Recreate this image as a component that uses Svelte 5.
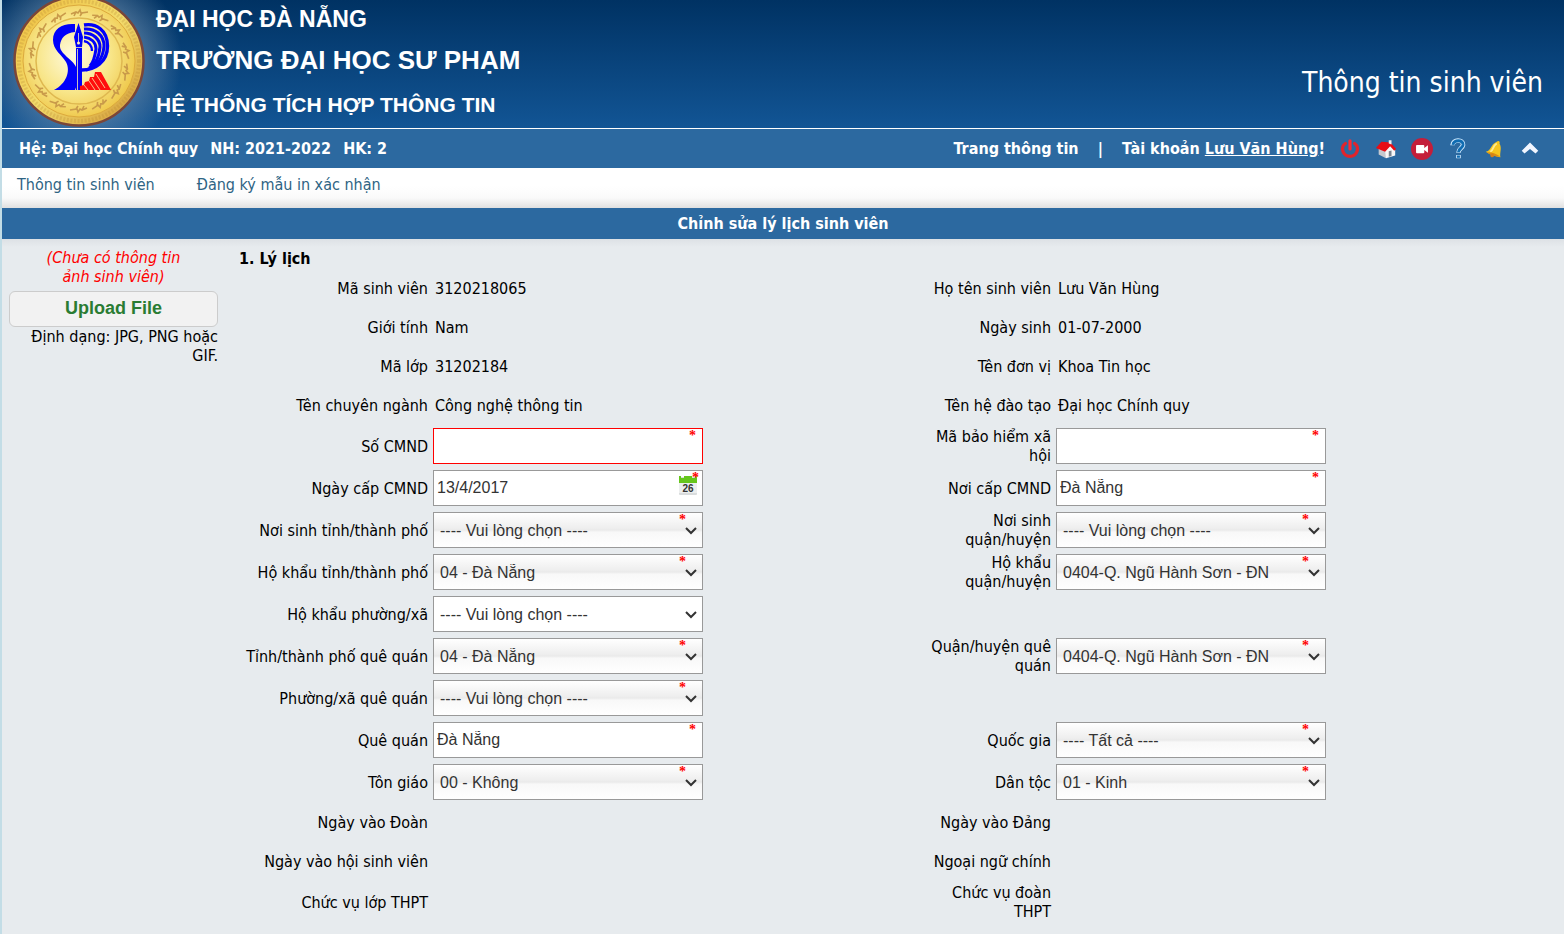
<script>
  const pick = '---- Vui lòng chọn ----';
  const rows = [
    { kind: 'info', cells: [['Mã sinh viên', 'text', '3120218065'], ['Họ tên sinh viên', 'text', 'Lưu Văn Hùng']] },
    { kind: 'info', cells: [['Giới tính', 'text', 'Nam'], ['Ngày sinh', 'text', '01-07-2000']] },
    { kind: 'info', cells: [['Mã lớp', 'text', '31202184'], ['Tên đơn vị', 'text', 'Khoa Tin học']] },
    { kind: 'info', cells: [['Tên chuyên ngành', 'text', 'Công nghệ thông tin'], ['Tên hệ đào tạo', 'text', 'Đại học Chính quy']] },
    { kind: 'edit', cells: [['Số CMND', 'input', '', 'invalid'], ['Mã bảo hiểm xã hội', 'input', '']] },
    { kind: 'edit', cells: [['Ngày cấp CMND', 'date', '13/4/2017'], ['Nơi cấp CMND', 'input', 'Đà Nẵng']] },
    { kind: 'edit', cells: [['Nơi sinh tỉnh/thành phố', 'select', pick], ['Nơi sinh quận/huyện', 'select', pick]] },
    { kind: 'edit', cells: [['Hộ khẩu tỉnh/thành phố', 'select', '04 - Đà Nẵng'], ['Hộ khẩu quận/huyện', 'select', '0404-Q. Ngũ Hành Sơn - ĐN']] },
    { kind: 'edit', cells: [['Hộ khẩu phường/xã', 'select', pick, 'optional']] },
    { kind: 'edit', cells: [['Tỉnh/thành phố quê quán', 'select', '04 - Đà Nẵng'], ['Quận/huyện quê quán', 'select', '0404-Q. Ngũ Hành Sơn - ĐN']] },
    { kind: 'edit', cells: [['Phường/xã quê quán', 'select', pick]] },
    { kind: 'edit', cells: [['Quê quán', 'input', 'Đà Nẵng'], ['Quốc gia', 'select', '---- Tất cả ----']] },
    { kind: 'edit', cells: [['Tôn giáo', 'select', '00 - Không'], ['Dân tộc', 'select', '01 - Kinh']] },
    { kind: 'info', cells: [['Ngày vào Đoàn', 'text', ''], ['Ngày vào Đảng', 'text', '']] },
    { kind: 'info', cells: [['Ngày vào hội sinh viên', 'text', ''], ['Ngoại ngữ chính', 'text', '']] },
    { kind: 'edit', cells: [['Chức vụ lớp THPT', 'text', ''], ['Chức vụ đoàn THPT', 'text', '']] }
  ];
  const marks = Array.from({ length: 14 }, (_, i) => (i * 360) / 14);
</script>

<div class="page">
  <header class="banner">
    <svg class="seal" viewBox="0 0 134 128" aria-hidden="true">
      <defs>
        <radialGradient id="gold" cx="45%" cy="45%" r="60%">
          <stop offset="0" stop-color="#fffbe0" />
          <stop offset="0.55" stop-color="#f8e68a" />
          <stop offset="1" stop-color="#eec544" />
        </radialGradient>
        <linearGradient id="rim" x1="0" y1="0" x2="1" y2="1">
          <stop offset="0" stop-color="#eebc3c" />
          <stop offset="0.5" stop-color="#f3dc6c" />
          <stop offset="1" stop-color="#cf9434" />
        </linearGradient>
      </defs>
      <circle cx="67" cy="61" r="64.5" fill="url(#rim)" stroke="#7b4638" stroke-width="2.5" />
      <circle cx="67" cy="61" r="60" fill="none" stroke="#b5852e" stroke-width="4" stroke-dasharray="2 1.6" opacity="0.25" />
      <circle cx="67" cy="61" r="56" fill="url(#gold)" stroke="#dca93c" />
      <circle cx="67" cy="61" r="43" fill="none" stroke="#dfb850" stroke-width="1.5" />
      {#each marks as a}
        <path transform="rotate({a} 67 61)" d="M59 14 L64 12 L66 13 L68 10 L69 13 L76 12 M64 12 L62 16 M70 13 L68 16" fill="none" stroke="#c99a4a" stroke-width="1.6" />
      {/each}
      <g fill="#0000fb">
        <path d="M63 24 C51 23 41 28 41 40 C41 50 50 55 54 62 C59 71 54 84 42 90 L63 90 C66 84 67 74 64 67 C61 59 47 54 48 45 C49 38 53 33 63 32 Z" />
        <path d="M66.500 23 L71 37 L70 47 L70 90 L64 90 L64 47 L62 37 Z" />
      </g>
      <g fill="none" stroke="#0000fb">
        <path d="M72 25 C84 23 95.500 30 95.500 46 C95.500 62 83 70 70 70" stroke-width="3.400" />
        <path d="M72 29 C83 28 92 35 92 46 C91 60 83 67 74 70" stroke-width="3" />
        <path d="M72 33 C81 33 88 39 88 47 C87 57 83 65 77 68" stroke-width="3" />
        <path d="M72 37 C79 38 84 42 84 49 C83 56 81 63 78 66" stroke-width="3" />
        <path d="M72 41 C77 42 80 46 80 51" stroke-width="2.400" />
      </g>
      <path d="M66.500 33 V43 M63 47.500 H71 M65.500 49 V90" stroke="#f8eeb0" stroke-width="0.800" />
      <circle cx="66.500" cy="43" r="1.500" fill="#fff3b5" />
      <path d="M68 90 L68 86 L72 85 L73 82 L77 81 L78 77 L82 77 L83 72 L89 72 L99 90 Z" fill="#ff0d0d" />
      <path d="M72 85 L76 90 M77 81 L83 90 M80 78 L88 90 M84 74 L93 88" stroke="#f8d49a" stroke-width="0.900" />
    </svg>
    <div class="names">
      <p class="org">ĐẠI HỌC ĐÀ NẴNG</p>
      <p class="school">TRƯỜNG ĐẠI HỌC SƯ PHẠM</p>
      <p class="system">HỆ THỐNG TÍCH HỢP THÔNG TIN</p>
    </div>
    <h1>Thông tin sinh viên</h1>
  </header>

  <div class="status">
    <div class="term"><span>Hệ: Đại học Chính quy</span><span>NH: 2021-2022</span><span>HK: 2</span></div>
    <div class="account">
      <a class="plain" href="#portal">Trang thông tin</a>
      <span class="bar">|</span>
      <span>Tài khoản <a href="#account">Lưu Văn Hùng</a>!</span>
    </div>
    <div class="tools">
      <button aria-label="Đăng xuất">
        <svg viewBox="0 0 24 24"><path d="M7 6 C1 10 4 20 12 20 S23 10 17 6" fill="none" stroke="#e0242c" stroke-width="3.500" stroke-linecap="round" /><path d="M12 3 V12" stroke="#ff2a30" stroke-width="3.500" stroke-linecap="round" /></svg>
      </button>
      <button aria-label="Trang chủ">
        <svg viewBox="0 0 24 24"><path d="M4 10 L12 13 V22 L4 18 Z" fill="#c5c8ce" /><path d="M11 14 L17 7 L22 13 V19 L12 22 Z" fill="#f7f7f7" /><path d="M1 11 L7 4 L17 5 L23 12 L21 14 L16.500 9 L11 15 Z" fill="#e80d15" /><path d="M15 2.500 H18 V7 L15 6 Z" fill="#eee" /><path d="M15 14.500 L18 13.500 V19.500 L15 20.500 Z" fill="#7b838f" /></svg>
      </button>
      <button aria-label="Video">
        <svg viewBox="0 0 24 24"><circle cx="12" cy="12" r="12" fill="#c41e3a" /><rect x="5.500" y="7.500" width="9" height="9" rx="1" fill="#fff" /><path d="M13 12 L18.500 8 V16 Z" fill="#fff" /></svg>
      </button>
      <button aria-label="Trợ giúp">
        <svg viewBox="0 0 24 24"><g fill="none"><path d="M6 8 C6 1 18 1 17.500 7.500 C17 11.500 12.500 11 12.500 16 M12.500 18.500 V22" stroke="#cfeaff" stroke-width="5" /><path d="M6.500 7.500 C7 1.500 18 1.500 17.500 7.500 C17 11.500 12.500 11 12.500 15.500 M12.500 19 V21.500" stroke="#0f6cb2" stroke-width="3.200" /></g></svg>
      </button>
      <button aria-label="Thông báo">
        <svg viewBox="0 0 24 24"><path d="M15 4 C17 2 19 4 18 6 C21 11 18 16 19 21 C14 20 9 19 3 15 C9 14 8 7 15 4 Z" fill="#f7c51e" /><path d="M15 6 C10 9 12 13 8 15" stroke="#ffec8c" stroke-width="2" fill="none" /><path d="M4 15.500 C9 15 15 17 19 20.500 C14 20.500 8 19 4 15.500 Z" fill="#dc8d12" /><circle cx="10" cy="19" r="2" fill="#d6801a" /></svg>
      </button>
      <button aria-label="Thu gọn">
        <svg viewBox="0 0 24 24"><path d="M3 14 L12 5 L21 14 L18 17 L12 12 L6 17 Z" fill="#f1f6ff" /></svg>
      </button>
    </div>
  </div>

  <nav>
    <a href="#info">Thông tin sinh viên</a>
    <a href="#forms">Đăng ký mẫu in xác nhận</a>
  </nav>

  <h2>Chỉnh sửa lý lịch sinh viên</h2>

  <main>
    <aside>
      <p class="missing">(Chưa có thông tin<br />ảnh sinh viên)</p>
      <button class="upload">Upload File</button>
      <p class="formats">Định dạng: JPG, PNG hoặc GIF.</p>
    </aside>

    <form>
      <h3>1. Lý lịch</h3>
      {#each rows as row, r}
        <div class="row {row.kind}">
          {#each row.cells as [label, type, value, flag], c}
            {#if type === 'text'}
              <span class="label">{label}</span>
              <span class="value">{value}</span>
            {:else}
              <label class="label" for="f{r}-{c}">{label}</label>
              <div class="field {type} {flag ?? ''}">
                {#if type === 'select'}
                  <select id="f{r}-{c}"><option>{value}</option></select>
                  <svg class="chevron" viewBox="0 0 12 8" aria-hidden="true"><path d="M1 1 L6 6 L11 1" fill="none" stroke="#333" stroke-width="2" /></svg>
                {:else}
                  <input id="f{r}-{c}" type="text" {value} />
                {/if}
                {#if type === 'date'}
                  <svg class="calendar" viewBox="0 0 20 20" aria-hidden="true">
                    <rect x="1" y="2" width="18" height="18" rx="1" fill="#d9dcdd" />
                    <rect x="1" y="8" width="18" height="10" fill="#eceeee" />
                    <path d="M1 1 H3 V3 H6 V1 H14 V3 H17 V1 H19 V8 H1 Z" fill="#66c61c" />
                    <text x="10" y="17">26</text>
                  </svg>
                {/if}
                {#if flag !== 'optional'}<span class="star">*</span>{/if}
              </div>
            {/if}
          {/each}
        </div>
      {/each}
    </form>
  </main>
</div>

<style>
  :global(body) {
    margin: 0;
    background: #e7ebee;
  }
  .page {
    min-height: 100vh;
    box-sizing: border-box;
    border-left: 2px solid #c3dde6;
    font: 16px/19px Tahoma, 'DejaVu Sans Condensed', 'Noto Sans', sans-serif;
    color: #000;
    background: #e7ebee;
  }
  p, h1, h2, h3 {
    margin: 0;
  }
  .banner {
    display: flex;
    height: 128px;
    border-bottom: 1px solid #fff;
    background:
      radial-gradient(circle at 80px 60px, #6c8cab 0, #6c8cab88 64px, transparent 100px),
      linear-gradient(#003263, #125595);
    color: #fff;
  }
  .seal {
    width: 134px;
    height: 128px;
    margin-left: 10px;
  }
  .names {
    flex: 1;
    padding: 5px 0 0 10px;
    font-family: 'Liberation Sans', Arial, sans-serif;
    font-weight: bold;
    white-space: nowrap;
  }
  .org {
    font-size: 23px;
    line-height: 28px;
  }
  .school {
    font-size: 26px;
    line-height: 54px;
  }
  .system {
    font-size: 21px;
    line-height: 36px;
  }
  h1 {
    padding: 65px 21px 0 0;
    font-size: 28px;
    line-height: 36px;
    font-weight: normal;
  }
  .status {
    display: flex;
    align-items: center;
    height: 39px;
    padding: 0 16px 0 17px;
    background: #2c69a0;
    color: #fff;
    font-weight: bold;
  }
  .term {
    display: flex;
    gap: 12px;
    flex: 1;
  }
  .status a {
    color: inherit;
  }
  .status .plain {
    text-decoration: none;
  }
  .bar {
    margin: 0 14px;
  }
  .tools {
    display: flex;
    margin-left: 7px;
  }
  .tools button {
    display: flex;
    justify-content: center;
    width: 36px;
    padding: 0;
    border: 0;
    background: none;
  }
  .tools svg {
    width: 22px;
    height: 22px;
  }
  nav {
    display: flex;
    gap: 42px;
    height: 33px;
    padding: 7px 15px 0;
    background: linear-gradient(#fff 45%, #fafafa 75%, #e0e0e0);
  }
  nav a {
    color: #2e6484;
    text-decoration: none;
  }
  h2 {
    background: #2c69a0;
    color: #fff;
    font-size: 16px;
    line-height: 31px;
    text-align: center;
  }
  main {
    display: flex;
    align-items: flex-start;
    padding: 9px 21px 10px 7px;
    background: linear-gradient(#dde1e5, #e7ebee 8px);
  }
  aside {
    width: 209px;
    flex: none;
    text-align: right;
  }
  .missing {
    color: #f00;
    font-style: italic;
    text-align: center;
  }
  .upload {
    display: block;
    width: 100%;
    height: 36px;
    margin: 5px 0 0;
    padding: 0 0 2px;
    border: 1px solid #ccc;
    border-radius: 6px;
    background: #f2f2f2;
    color: #2a7c33;
    font: bold 18px 'Liberation Sans', Arial, sans-serif;
  }
  form {
    flex: 1;
    padding-left: 21px;
  }
  h3 {
    font-size: 16px;
    line-height: 21px;
  }
  .row {
    display: grid;
    grid-template-columns: 189px 1fr 126px 1fr;
    column-gap: 5px;
    align-items: center;
  }
  .info {
    height: 39px;
  }
  .edit {
    height: 42px;
  }
  .label {
    text-align: right;
  }
  .value {
    padding-left: 2px;
  }
  .field {
    position: relative;
    width: 270px;
  }
  input, select {
    display: block;
    width: 100%;
    height: 36px;
    box-sizing: border-box;
    border: 1px solid #999;
    border-radius: 0;
    background: #fff;
    color: #333;
    font: 16px 'Liberation Sans', Arial, sans-serif;
  }
  input {
    padding: 0 3px;
  }
  select {
    appearance: none;
    padding: 0 24px 0 6px;
    background: linear-gradient(#fff 0, #eee 45%, #eaeaea 50%, #f8f8f8 56%, #fff);
  }
  .optional select {
    background: #fff;
  }
  .invalid input {
    border-color: #f00;
  }
  .chevron {
    position: absolute;
    right: 6px;
    top: 15px;
    width: 12px;
    height: 8px;
  }
  .calendar {
    position: absolute;
    right: 5px;
    top: 5px;
    width: 20px;
    height: 20px;
  }
  .calendar text {
    font: bold 10px 'Liberation Sans', sans-serif;
    text-anchor: middle;
    fill: #333;
  }
  .star {
    position: absolute;
    top: 0;
    right: 7px;
    color: #f00;
    font: bold 14px/16px 'Liberation Serif', serif;
  }
  .select .star {
    right: 17px;
  }
  .date .star {
    right: 4px;
  }
</style>
